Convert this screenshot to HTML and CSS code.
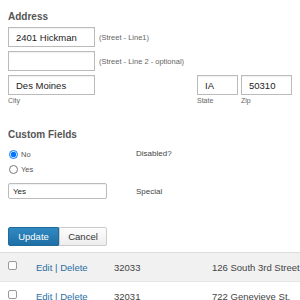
FILE: index.html
```html
<!DOCTYPE html>
<html lang="en">
<head>
    <meta charset="UTF-8">
    <title>Edit Address</title>
    <link rel="stylesheet" href="styles.css">
</head>
<body>
<div class="form">
    <h4>Address</h4>
    <div class="line">
        <input class="text wide" type="text" value="2401 Hickman">
        <span class="hint">(Street - Line1)</span>
    </div>
    <div class="line">
        <input class="text wide" type="text" value="">
        <span class="hint">(Street - Line 2 - optional)</span>
    </div>
    <div class="place">
        <input class="text" type="text" value="Des Moines">
        <span></span>
        <input class="text" type="text" value="IA">
        <input class="text" type="text" value="50310">
        <span class="hint">City</span>
        <span></span>
        <span class="hint">State</span>
        <span class="hint">Zip</span>
    </div>

    <h4 class="custom">Custom Fields</h4>
    <div class="field">
        <div class="radios">
            <label><input type="radio" name="disabled" checked> No</label>
            <label><input type="radio" name="disabled"> Yes</label>
        </div>
        <span class="name">Disabled?</span>
    </div>
    <div class="field">
        <input class="text small" type="text" value="Yes">
        <span class="name">Special</span>
    </div>

    <div class="buttons">
        <button class="btn primary">Update</button><button class="btn">Cancel</button>
    </div>
</div>

<table class="list">
    <tr class="odd">
        <td class="check"><span class="box"></span></td>
        <td class="actions"><a>Edit</a> | <a>Delete</a></td>
        <td class="num">32033</td>
        <td class="street">126 South 3rd Street</td>
    </tr>
    <tr>
        <td class="check"><span class="box"></span></td>
        <td class="actions"><a>Edit</a> | <a>Delete</a></td>
        <td class="num">32031</td>
        <td class="street">722 Genevieve St.</td>
    </tr>
</table>
</body>
</html>
```

FILE: styles.css
```css
* {
    margin: 0;
    padding: 0;
    box-sizing: border-box;
}

body {
    font-family: "Liberation Sans", Arial, sans-serif;
    color: #444;
    background: #fff;
    overflow: hidden;
    width: 300px;
}

.form {
    padding: 11px 8px 0 8px;
}

h4 {
    font-size: 10px;
    font-weight: bold;
    color: #555;
    margin-bottom: 5px;
}

.text {
    border: 1px solid #bbb;
    height: 20px;
    padding: 0 7px;
    font-family: inherit;
    font-size: 9.5px;
    color: #222;
    background: #fff;
    box-shadow: inset 0 1px 1px rgba(0, 0, 0, 0.06);
}

.line {
    display: flex;
    align-items: center;
    gap: 4px;
    margin-bottom: 4px;
}

.text.wide {
    width: 87px;
}

.hint {
    font-size: 7.5px;
    color: #666;
}

.place .hint {
    font-size: 7px;
}

.place {
    display: grid;
    grid-template-columns: 87px 1fr 41px 51px;
    column-gap: 3px;
    row-gap: 2px;
    margin-top: 2px;
}

.place .text {
    width: 100%;
}

.custom {
    margin-top: 25px;
    margin-bottom: 7px;
}

.field {
    display: grid;
    grid-template-columns: 128px 1fr;
    align-items: start;
}

.name {
    font-size: 8px;
    color: #444;
    padding-top: 2px;
}

.radios label {
    display: flex;
    align-items: center;
    gap: 3px;
    font-size: 7.5px;
    color: #555;
    height: 15px;
}

.radios input {
    width: 9px;
    height: 9px;
    margin-left: 1px;
}

.field + .field {
    margin-top: 6px;
    align-items: center;
}

.field + .field .name {
    padding-top: 0;
}

.text.small {
    width: 99px;
    height: 16px;
    padding: 0 4px;
    font-size: 8px;
    border-radius: 2px;
}

.buttons {
    display: flex;
    margin-top: 28px;
    margin-bottom: 6px;
}

.btn {
    height: 19px;
    padding: 0;
    font-family: inherit;
    font-size: 9.5px;
    color: #333;
    background: linear-gradient(#fdfdfd, #ededed);
    border: 1px solid #ccc;
    border-radius: 0 2px 2px 0;
    width: 48px;
}

.btn.primary {
    width: 51px;
    color: #fff;
    background: linear-gradient(#3189c2, #1e6fa5);
    border-color: #1f6b9c;
    border-radius: 2px 0 0 2px;
}

.list {
    width: 100%;
    border-collapse: collapse;
    border-top: 1px solid #ddd;
    font-size: 9.5px;
    color: #444;
    white-space: nowrap;
}

.list td {
    height: 29px;
    padding: 0;
}

.list tr.odd {
    background: #f1f1f1;
    border-bottom: 1px solid #e6e6e6;
}

.check {
    width: 36px;
    padding-left: 8px !important;
}

.box {
    display: block;
    width: 9px;
    height: 9px;
    border: 1px solid #999;
    border-radius: 2px;
    background: #fff;
    margin-top: -4px;
}

.actions {
    width: 78px;
    color: #2b6ea3;
}

.actions a {
    color: #2b6ea3;
}

.num {
    width: 98px;
}
```
